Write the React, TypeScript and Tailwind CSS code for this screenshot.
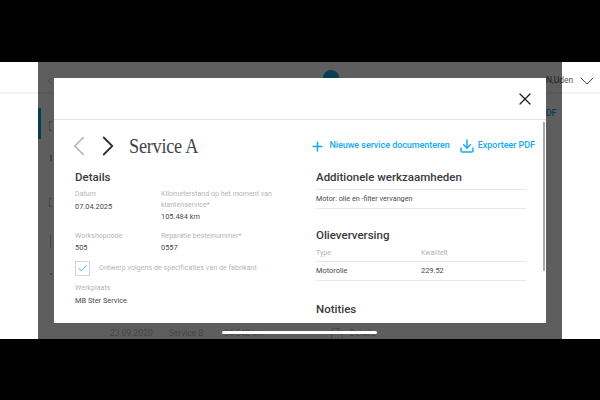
import { ChevronDown, ChevronLeft, ChevronRight, Download, File, Plus, X, Check } from "lucide-react";

const sans = "font-['Roboto','Liberation_Sans',sans-serif]";

function Field({ label, value }: { label: string; value: string }) {
  return (
    <div className="flex flex-col">
      <span className="text-[7px] leading-[10.5px] tracking-[0.05px] text-[#b4b4b4]">{label}</span>
      <span className="mt-[1px] text-[7.4px] leading-[12px] text-[#4a4a4a]">{value}</span>
    </div>
  );
}

function Heading({ children }: { children: string }) {
  return <h2 className="text-[11.5px] leading-[16px] font-medium text-[#3a3a3a]">{children}</h2>;
}

function ServiceModal() {
  return (
    <div className="absolute left-[54px] top-[16px] flex h-[245px] w-[492px] flex-col overflow-hidden bg-white">
      <div className="flex h-[42px] shrink-0 items-center justify-end border-b border-[#e6e6e6] pr-[11px]">
        <X className="size-[20px] text-[#222]" strokeWidth={1.6} />
      </div>

      <div className="mt-[9px] flex h-[34px] shrink-0 items-center justify-between pr-[11px] pl-[8px]">
        <div className="flex items-center">
          <ChevronLeft className="size-[34px] text-[#b0b0b0]" strokeWidth={1.1} />
          <ChevronRight className="ml-[-5px] size-[34px] text-[#333]" strokeWidth={1.3} />
          <h1 className="ml-[4px] origin-left scale-x-[0.87] font-['Liberation_Serif',serif] text-[21px] leading-none tracking-[-0.3px] text-[#444]">Service A</h1>
        </div>
        <div className="flex items-center text-[9px] font-medium tracking-[-0.05px] text-[#12a9f0]">
          <Plus className="size-[15px]" strokeWidth={2.4} />
          <span className="ml-[4.5px]">Nieuwe service documenteren</span>
          <Download className="ml-[9px] size-[16px]" strokeWidth={2.2} />
          <span className="ml-[3px]">Exporteer PDF</span>
        </div>
      </div>

      <div className="flex pl-[21px] pt-[6px]">
        <div className="w-[241px] shrink-0">
          <Heading>Details</Heading>
          <div className="mt-[4px] grid grid-cols-[86px_128px]">
            <Field label="Datum" value="07.04.2025" />
            <Field label="Kilometerstand op het moment van klantenservice*" value="105.484 km" />
            <div className="mt-[7.5px]"><Field label="Workshopcode" value="505" /></div>
            <div className="mt-[7.5px]"><Field label="Reparatie bestelnummer*" value="0557" /></div>
          </div>
          <div className="mt-[7px] flex items-center">
            <span className="flex size-[15px] items-center justify-center border border-[#d4d4d4]">
              <Check className="size-[11px] text-[#12a9f0]" strokeWidth={1.8} />
            </span>
            <span className="ml-[9px] text-[7px] tracking-[0.07px] text-[#b4b4b4]">Ontwerp volgens de specificaties van de fabrikant</span>
          </div>
          <div className="mt-[7px]"><Field label="Werkplaats" value="MB Ster Service" /></div>
        </div>

        <div className="w-[210px] shrink-0">
          <Heading>Additionele werkzaamheden</Heading>
          <div className="mt-[4px] flex h-[20px] items-center border-y border-[#e8e8e8] text-[7.2px] text-[#4a4a4a]">Motor: olie en -filter vervangen</div>
          <div className="mt-[18px]"><Heading>Olieverversing</Heading></div>
          <div className="mt-[3px] grid h-[16px] grid-cols-[105px_105px] items-center border-b border-[#e8e8e8] text-[7px] text-[#b4b4b4]">
            <span>Type</span>
            <span>Kwaliteit</span>
          </div>
          <div className="grid h-[19px] grid-cols-[105px_105px] items-center border-b border-[#e8e8e8] text-[7.4px] text-[#4a4a4a]">
            <span>Motorolie</span>
            <span>229.52</span>
          </div>
          <div className="mt-[20px]"><Heading>Notities</Heading></div>
        </div>
      </div>

      {/* scrollbar */}
      <div className="absolute top-[44px] right-[1px] h-[149px] w-[2px] bg-[#a9a9a9]" />
    </div>
  );
}

export default function App() {
  return (
    <div className={`flex h-[400px] w-[600px] flex-col overflow-hidden bg-black ${sans}`}>
      <div className="h-[62px] shrink-0" />

      <div className="relative h-[277px] shrink-0 overflow-hidden bg-white">
        {/* page behind the dialog */}
        <div className="flex h-full flex-col">
          <div className="flex h-[32px] shrink-0 items-center border-b-2 border-[#f2f2f2] pt-[7px] pl-[44px]">
            <ChevronLeft className="size-[12px] text-[#999]" strokeWidth={1.5} />
            <span className="ml-[267px] mt-[1px] size-[16px] self-start rounded-full bg-[#12a9e0]" />
            <span className="ml-[207px] text-[8.5px] text-[#555]">N,Uden</span>
            <ChevronDown className="ml-[2px] size-[24px] text-[#444]" strokeWidth={1} />
          </div>

          <div className="flex min-h-0 flex-1">
            <div className="ml-[38px] flex w-[14px] shrink-0 flex-col">
              <div className="mt-[14px] h-[31px] w-[3px] bg-[#12a9d8]" />
              <span className="mt-[-18px] ml-[11px] h-[10px] w-[3px] border border-r-0 border-[#bbb]" />
              <span className="mt-[24px] ml-[12px] h-[6px] w-[2px] bg-[#bbb]" />
              <span className="mt-[37px] ml-[11px] h-[9px] w-[3px] border border-r-0 border-[#bbb]" />
              <span className="mt-[28px] ml-[12px] h-[13px] w-[2px] border-l border-[#bbb]" />
              <span className="mt-[25px] ml-[12px] h-[2px] w-[2px] bg-[#bbb]" />
            </div>
            <div className="ml-[488px] pt-[13px] text-[9px] font-medium text-[#12a9d8]">PDF</div>
          </div>

          <div className="flex h-[19px] shrink-0 items-center pt-[8px] pl-[110px] text-[8.5px] text-[#bbb]">
            <span>23.09.2020</span>
            <span className="ml-[16px]">Service B</span>
            <span className="ml-[20px]">54.542 km</span>
            <File className="ml-[65px] mt-[2px] size-[16px]" strokeWidth={1.2} />
            <span className="ml-[5px]">Details</span>
          </div>
        </div>

        {/* dimmed backdrop */}
        <div className="absolute inset-y-0 left-[38px] right-[38px] bg-black/[0.63]" />
        <ServiceModal />

        {/* home indicator */}
        <div className="absolute left-[222px] top-[269px] h-[3px] w-[155px] rounded-full bg-white" />
      </div>

      <div className="flex-1" />
    </div>
  );
}
